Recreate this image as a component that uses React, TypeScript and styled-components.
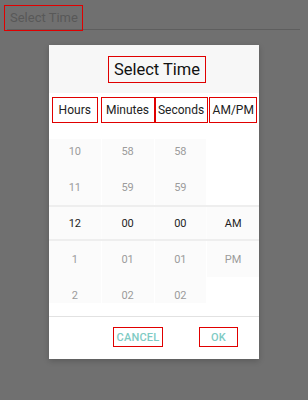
import React from "react";
import styled, { createGlobalStyle } from "styled-components";

const GlobalStyle = createGlobalStyle`
  html, body {
    margin: 0;
    padding: 0;
    background: #707070;
    font-family: Roboto, "Noto Sans", sans-serif;
  }
`;

type Cell = string | null;

const columns = [
  { label: "Hours", w: 44 },
  { label: "Minutes", w: 52 },
  { label: "Seconds", w: 51 },
  { label: "AM/PM", w: 46 },
];

const rows: Cell[][] = [
  ["10", "58", "58", null],
  ["11", "59", "59", null],
  ["12", "00", "00", "AM"],
  ["1", "01", "01", "PM"],
  ["2", "02", "02", null],
];

export default function App() {
  return (
    <Screen>
      <GlobalStyle />
      <Field>
        <FieldText>Select Time</FieldText>
      </Field>
      <Dialog>
        <Header>
          <Title>Select Time</Title>
        </Header>
        <Heads>
          {columns.map((c) => (
            <HeadCell key={c.label}>
              <HeadLabel $w={c.w}>{c.label}</HeadLabel>
            </HeadCell>
          ))}
        </Heads>
        <Wheel>
          {rows.map((row, i) => (
            <Row key={i} $selected={i === 2} $first={i === 0}>
              {row.map((v, j) => (
                <Value key={j} $filled={v !== null} $selected={i === 2}>
                  {v}
                </Value>
              ))}
            </Row>
          ))}
        </Wheel>
        <Footer>
          <ActionButton $w={48}>CANCEL</ActionButton>
          <ActionButton $w={37}>OK</ActionButton>
        </Footer>
      </Dialog>
    </Screen>
  );
}

const Screen = styled.div`
  width: 308px;
  height: 400px;
  display: flex;
  flex-direction: column;
  overflow: hidden;
`;

const Field = styled.div`
  margin: 0 8px 0 7px;
  height: 29px;
  border-bottom: 1px solid #5e5e5e;
  display: flex;
  align-items: flex-start;
`;

const FieldText = styled.span`
  margin: 5px 0 -3px -3px;
  width: 72px;
  height: 24px;
  padding-left: 5px;
  box-sizing: content-box;
  border: 1px solid #e00000;
  line-height: 24px;
  font-size: 13px;
  color: #585858;
  white-space: nowrap;
`;

const Dialog = styled.div`
  width: 210px;
  height: 314px;
  margin: 15px auto 0;
  background: #ffffff;
  display: flex;
  flex-direction: column;
  box-shadow: 0 2px 6px rgba(0, 0, 0, 0.2);
`;

const Header = styled.div`
  height: 48px;
  background: #f7f7f7;
  display: flex;
  align-items: center;
  justify-content: center;
`;

const Title = styled.div`
  width: 96px;
  height: 25px;
  border: 1px solid #e00000;
  display: flex;
  align-items: center;
  justify-content: center;
  font-size: 16.5px;
  color: #111;
  white-space: nowrap;
  margin-left: 6px;
`;

const Heads = styled.div`
  display: grid;
  grid-template-columns: repeat(4, 1fr);
  height: 46px;
  padding-top: 4px;
  box-sizing: border-box;
`;

const HeadCell = styled.div`
  display: flex;
  justify-content: center;
  align-items: flex-start;
`;

const HeadLabel = styled.div<{ $w: number }>`
  width: ${(p) => p.$w}px;
  height: 24px;
  border: 1px solid #e00000;
  display: flex;
  align-items: center;
  justify-content: center;
  font-size: 12px;
  color: #222;
  white-space: nowrap;
`;

const Wheel = styled.div`
  height: 164px;
  overflow: hidden;
  display: flex;
  flex-direction: column;
`;

const Row = styled.div<{ $selected: boolean; $first: boolean }>`
  display: grid;
  grid-template-columns: repeat(4, 1fr);
  column-gap: 1px;
  flex: 0 0 auto;
  height: ${(p) => (p.$selected ? 32 : 36)}px;
  margin-top: ${(p) => (p.$first ? -6 : 0)}px;
  border-top: ${(p) => (p.$selected ? "2px solid #eeeeee" : "none")};
  border-bottom: ${(p) => (p.$selected ? "2px solid #eeeeee" : "none")};
  background: ${(p) => (p.$selected ? "#fdfdfd" : "#ffffff")};
`;

const Value = styled.div<{ $filled: boolean; $selected: boolean }>`
  display: flex;
  align-items: center;
  justify-content: center;
  background: ${(p) => (p.$filled ? "#fbfbfb" : "transparent")};
  font-size: 11px;
  color: ${(p) => (p.$selected ? "#1e1e1e" : "#9c9c9c")};
`;

const Footer = styled.div`
  margin-top: 13px;
  border-top: 1px solid #e2e2e2;
  display: flex;
  justify-content: flex-end;
  gap: 36px;
  padding: 10px 21px 0 0;
`;

const ActionButton = styled.div<{ $w: number }>`
  width: ${(p) => p.$w}px;
  height: 18px;
  border: 1px solid #e00000;
  display: flex;
  align-items: center;
  justify-content: center;
  font-size: 11px;
  font-weight: 500;
  color: #80cbc4;
  letter-spacing: 0.2px;
`;
